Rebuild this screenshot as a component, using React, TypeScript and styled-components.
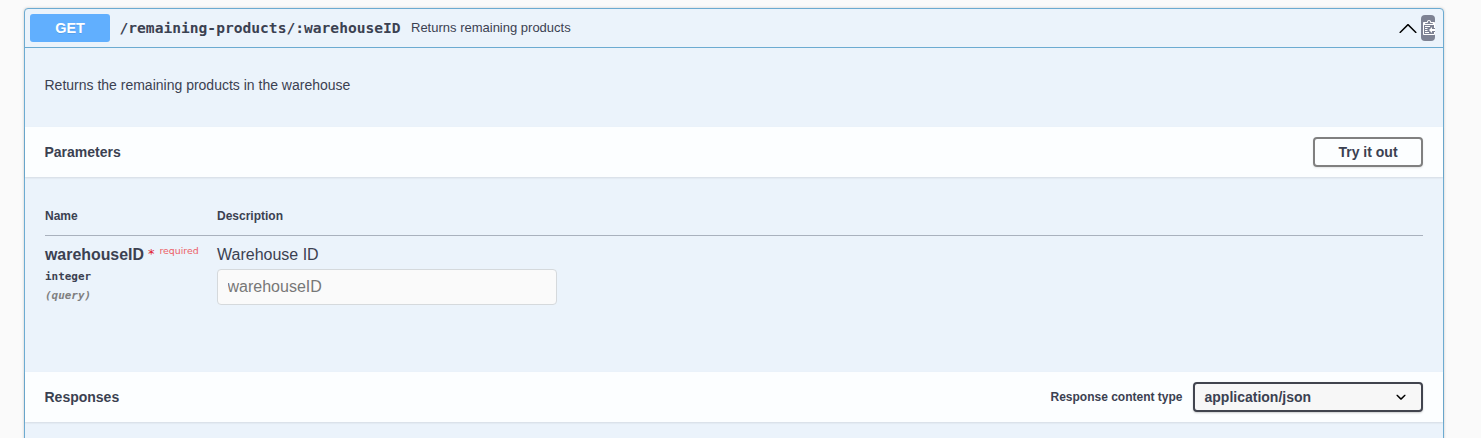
import React from "react";
import styled, { createGlobalStyle } from "styled-components";

const Global = createGlobalStyle`
  *, *::before, *::after { box-sizing: border-box; }
  body {
    margin: 0;
    background: #fafafa;
    color: #3b4151;
    font-family: "Liberation Sans", Arial, sans-serif;
    overflow: hidden;
  }
`;

const mono = `"DejaVu Sans Mono", monospace`;

const Page = styled.main`
  height: 438px;
  padding: 8px 37px 0 24px;
  overflow: hidden;
`;

const Operation = styled.section`
  height: 500px;
  border: 1px solid #6cabd1;
  border-radius: 4px;
  background: #ebf3fb;
  box-shadow: 0 0 3px rgba(0, 0, 0, 0.19);
`;

const Summary = styled.header`
  display: flex;
  align-items: center;
  height: 39px;
  padding: 0 8px 0 5px;
  border-bottom: 1px solid #6cabd1;
`;

const Method = styled.span`
  width: 80px;
  height: 28px;
  border-radius: 3px;
  background: #61affe;
  color: #fff;
  font-size: 14.4px;
  font-weight: 700;
  line-height: 28px;
  text-align: center;
  text-shadow: 0 1px 0 rgba(0, 0, 0, 0.1);
`;

const Path = styled.span`
  width: 281px;
  margin: 0 10.5px 0 9.5px;
  font-family: ${mono};
  font-size: 14.6px;
  font-weight: 700;
  line-height: 20px;
  white-space: nowrap;
`;

const Brief = styled.span`
  flex: 1;
  font-size: 13px;
  line-height: 18px;
`;

const CopyButton = styled.button`
  display: flex;
  align-items: center;
  width: 14px;
  height: 26px;
  margin-left: 3px;
  padding: 0 0 3px 2px;
  border: 0;
  border-radius: 4px;
  background: #7d8293;
  overflow: hidden;

  svg { flex: none; }
`;

const Description = styled.p`
  height: 79px;
  margin: 0;
  padding: 27px 20px 0 19.5px;
  font-size: 14px;
  line-height: 20px;
`;

const SectionHeader = styled.div`
  display: flex;
  align-items: center;
  height: 50px;
  padding: 0 20px 0 19.5px;
  background: #fcfeff;
  box-shadow: 0 1px 2px rgba(0, 0, 0, 0.1);
`;

const SectionTitle = styled.h4`
  flex: 1;
  margin: 0;
  font-size: 14px;
  line-height: 20px;
`;

const TryButton = styled.button`
  width: 110px;
  height: 30px;
  padding: 0;
  border: 2px solid #808080;
  border-radius: 4px;
  background: transparent;
  box-shadow: 0 1px 2px rgba(0, 0, 0, 0.1);
  color: #3b4151;
  font: 700 14px/26px "Liberation Sans", Arial, sans-serif;
`;

const Parameters = styled.div`
  height: 195px;
  padding: 29px 20px 0;
`;

const Columns = styled.div`
  display: grid;
  grid-template-columns: 172px 1fr;
`;

const TableHead = styled(Columns)`
  height: 30px;
  padding-top: 1px;
  border-bottom: 1px solid #a9b1bd;
  font-size: 12px;
  font-weight: 700;
  line-height: 18px;
`;

const ParameterRow = styled(Columns)`
  padding-top: 9px;
`;

const ParameterName = styled.div`
  display: flex;
  align-items: flex-start;
  font-size: 15.9px;
  font-weight: 700;
  line-height: 20px;
`;

const Star = styled.span`
  margin-left: 4px;
  color: #e0182d;
  font: 400 13px/17px "DejaVu Sans", sans-serif;
`;

const Required = styled.span`
  margin-left: 5px;
  color: #ec6067;
  font: 400 9.4px/12px "DejaVu Sans", sans-serif;
`;

const ParameterType = styled.div`
  margin-top: 3px;
  font: 700 10.95px/18px ${mono};
`;

const Location = styled.div`
  margin-top: 1px;
  color: #808080;
  font: italic 700 10.95px/18px ${mono};
`;

const ParameterText = styled.div`
  font-size: 16px;
  line-height: 20px;
`;

const Field = styled.input`
  display: block;
  width: 340px;
  height: 36px;
  margin-top: 4px;
  padding: 0 9.5px;
  border: 1px solid #d5d9dc;
  border-radius: 4px;
  background: #fafafa;
  font: 16px "Liberation Sans", Arial, sans-serif;

  &::placeholder { color: #777; opacity: 1; }
`;

const SelectLabel = styled.span`
  margin-right: 10.5px;
  font-size: 12px;
  font-weight: 700;
`;

const SelectBox = styled.div`
  display: flex;
  align-items: center;
  justify-content: space-between;
  width: 230px;
  height: 30px;
  padding: 0 10px 0 9.5px;
  border: 2px solid #41444e;
  border-radius: 4px;
  background: #f7f7f7;
  box-shadow: 0 1px 2px rgba(0, 0, 0, 0.2);
  font-size: 14px;
  font-weight: 700;
`;

const CollapseIcon = () => (
  <svg width="20" height="20" viewBox="0 0 20 20">
    <path d="M17.418 14.908c.272.268.709.268.979 0s.271-.701 0-.969l-7.908-7.83c-.27-.268-.707-.268-.979 0l-7.908 7.83c-.27.268-.27.701 0 .969.271.268.709.268.979 0L10 7.767l7.418 7.141z" />
  </svg>
);

const CopyIcon = () => (
  <svg width="15" height="16" viewBox="0 0 15 16" fill="#fff">
    <path d="M2 13h4v1H2v-1zm5-6H2v1h5V7zm2 3V8l-3 3 3 3v-2h5v-2H9zM4.5 9H2v1h2.5V9zM2 12h2.5v-1H2v1zm9 1h1v2c-.02.28-.11.52-.3.7-.19.18-.42.28-.7.3H1c-.55 0-1-.45-1-1V4c0-.55.45-1 1-1h3c0-1.11.89-2 2-2 1.11 0 2 .89 2 2h3c.55 0 1 .45 1 1v5h-1V6H1v9h10v-2zM2 5h8c0-.55-.45-1-1-1H8c-.55 0-1-.45-1-1s-.45-1-1-1-1 .45-1 1-.45 1-1 1H3c-.55 0-1 .45-1 1z" />
  </svg>
);

const SelectIcon = () => (
  <svg width="20" height="20" viewBox="0 0 20 20">
    <path d="M13.418 7.859c.271-.268.709-.268.978 0 .27.268.272.701 0 .969l-3.908 3.83c-.27.268-.707.268-.979 0l-3.908-3.83c-.27-.267-.27-.701 0-.969.271-.268.709-.268.978 0L10 11l3.418-3.141z" />
  </svg>
);

export default function App() {
  return (
    <>
      <Global />
      <Page>
        <Operation>
          <Summary>
            <Method>GET</Method>
            <Path>/remaining-products/:warehouseID</Path>
            <Brief>Returns remaining products</Brief>
            <CollapseIcon />
            <CopyButton aria-label="Copy to clipboard">
              <CopyIcon />
            </CopyButton>
          </Summary>
          <Description>Returns the remaining products in the warehouse</Description>
          <SectionHeader>
            <SectionTitle>Parameters</SectionTitle>
            <TryButton>Try it out</TryButton>
          </SectionHeader>
          <Parameters>
            <TableHead>
              <span>Name</span>
              <span>Description</span>
            </TableHead>
            <ParameterRow>
              <div>
                <ParameterName>
                  warehouseID
                  <Star>*</Star>
                  <Required>required</Required>
                </ParameterName>
                <ParameterType>integer</ParameterType>
                <Location>(query)</Location>
              </div>
              <div>
                <ParameterText>Warehouse ID</ParameterText>
                <Field placeholder="warehouseID" />
              </div>
            </ParameterRow>
          </Parameters>
          <SectionHeader>
            <SectionTitle>Responses</SectionTitle>
            <SelectLabel>Response content type</SelectLabel>
            <SelectBox>
              application/json
              <SelectIcon />
            </SelectBox>
          </SectionHeader>
        </Operation>
      </Page>
    </>
  );
}
